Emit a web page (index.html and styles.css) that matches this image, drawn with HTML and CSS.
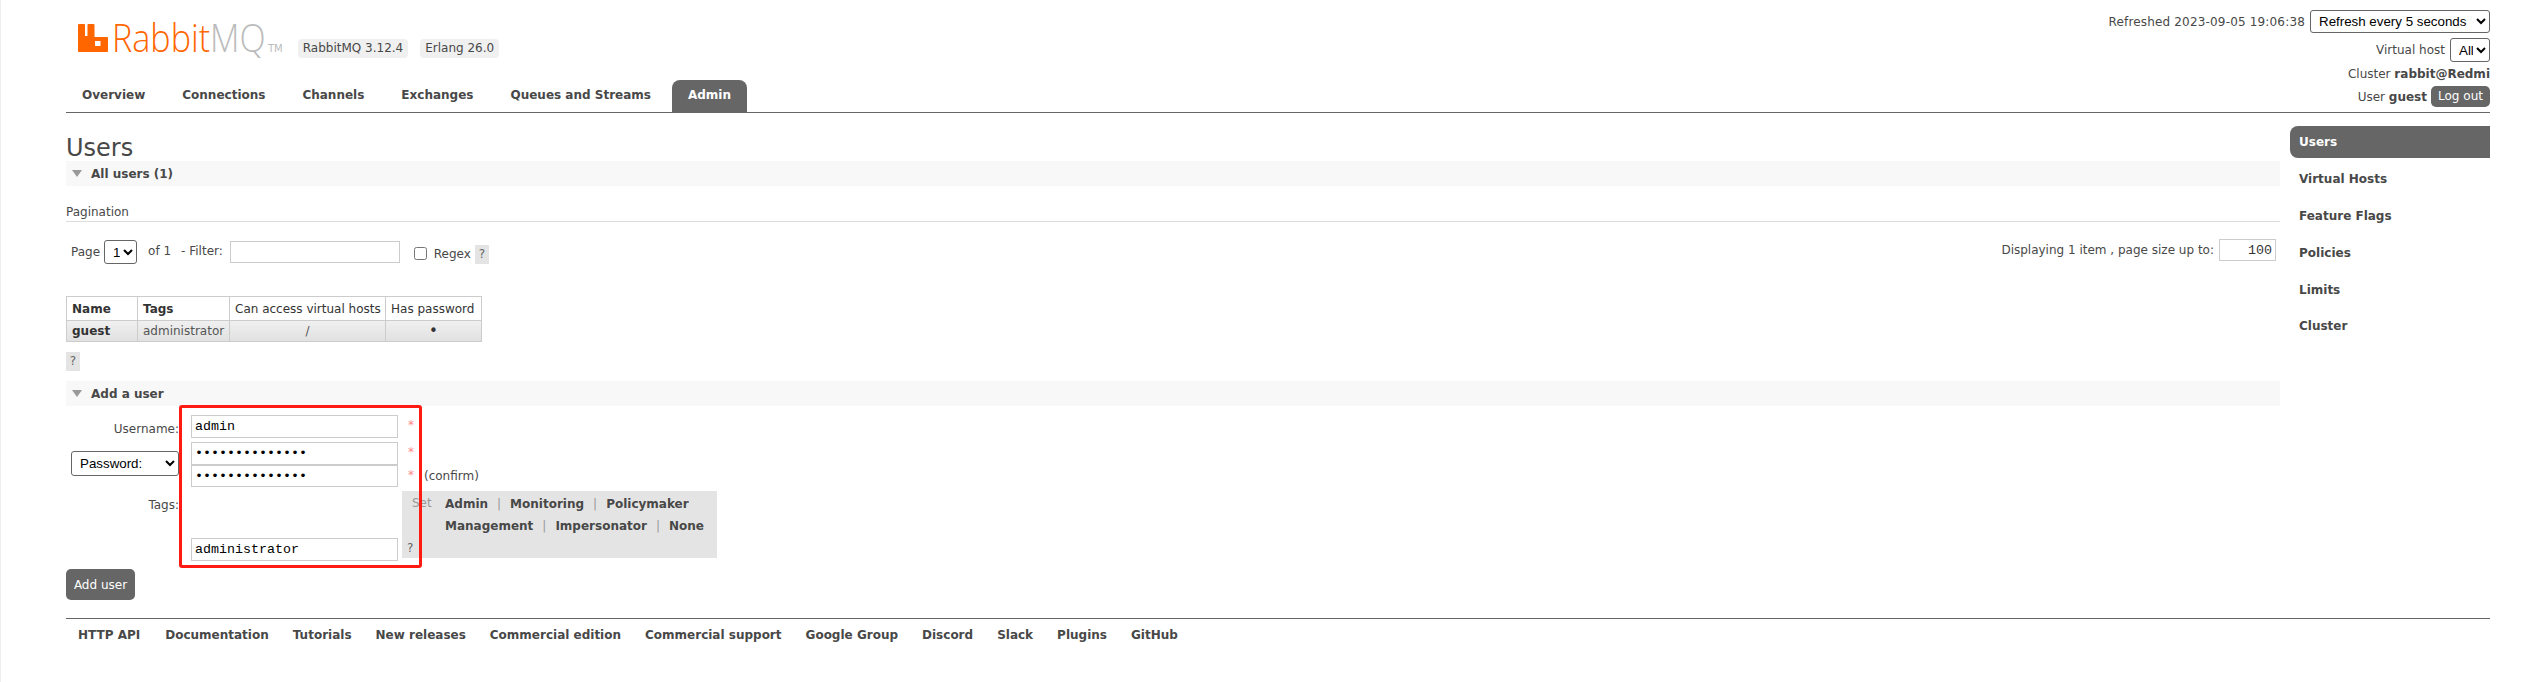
FILE: index.html
```html
<!DOCTYPE html>
<html lang="en">
<head>
<meta charset="utf-8">
<title>RabbitMQ Management</title>
<link rel="stylesheet" href="styles.css">
</head>
<body>
<div class="page">
  <header class="header">
    <div class="header-left">
      <div class="brand">
        <svg class="logo-mark" viewBox="0 0 30 28" width="30" height="28" aria-hidden="true">
          <path fill-rule="evenodd" fill="#ff6600" d="M1 0h5a1 1 0 0 1 1 1v11h2.500v-11a1 1 0 0 1 1-1h5a1 1 0 0 1 1 1v12h12.500a1 1 0 0 1 1 1v13a1 1 0 0 1-1 1h-28a1 1 0 0 1-1-1v-26a1 1 0 0 1 1-1zM17 17v5h5.500v-5z"/>
        </svg>
        <span class="logo-text"><span class="logo-rabbit">Rabbit</span><span class="logo-mq">MQ</span></span>
        <span class="logo-tm">TM</span>
        <span class="badge badge-first">RabbitMQ 3.12.4</span>
        <span class="badge">Erlang 26.0</span>
      </div>
      <nav class="tabs">
        <a class="tab">Overview</a>
        <a class="tab">Connections</a>
        <a class="tab">Channels</a>
        <a class="tab">Exchanges</a>
        <a class="tab">Queues and Streams</a>
        <a class="tab tab-active">Admin</a>
      </nav>
    </div>
    <div class="header-right">
      <div class="status-row status-refresh">
        <span class="refreshed">Refreshed 2023-09-05 19:06:38</span>
        <select class="select select-refresh"><option>Refresh every 5 seconds</option></select>
      </div>
      <div class="status-row status-vhost">
        <span>Virtual host</span>
        <select class="select select-vhost"><option>All</option></select>
      </div>
      <div class="status-row status-cluster"><span>Cluster <b>rabbit@Redmi</b></span></div>
      <div class="status-row status-user">
        <span>User <b>guest</b></span>
        <a class="logout">Log out</a>
      </div>
    </div>
  </header>

  <div class="body-row">
    <main class="main">
      <h1 class="title">Users</h1>
      <section class="bar"><i class="arrow"></i><span>All users (1)</span></section>
      <h3 class="pagination-title">Pagination</h3>
      <div class="pagination">
        <div class="pagination-left">
          <span class="page-label">Page</span>
          <select class="select select-page"><option>1</option></select>
          <span class="of-label">of 1</span>
          <span class="filter-label">- Filter:</span>
          <input class="input input-filter" type="text">
          <input class="check" type="checkbox">
          <span class="regex-label">Regex</span>
          <span class="help help-regex">?</span>
        </div>
        <div class="pagination-right">
          <span>Displaying 1 item , page size up to:</span>
          <input class="input input-size" type="text" value="100">
        </div>
      </div>

      <table class="users">
        <colgroup>
          <col class="col-name"><col class="col-tags"><col class="col-vhosts"><col class="col-pass">
        </colgroup>
        <thead>
          <tr><th class="th-strong">Name</th><th class="th-strong">Tags</th><th>Can access virtual hosts</th><th>Has password</th></tr>
        </thead>
        <tbody>
          <tr><td class="td-name">guest</td><td>administrator</td><td class="td-center">/</td><td class="td-center td-dot">•</td></tr>
        </tbody>
      </table>
      <span class="help help-table">?</span>

      <section class="bar bar-add"><i class="arrow"></i><span>Add a user</span></section>

      <form class="user-form">
        <label class="form-label label-username">Username:</label>
        <input class="input input-mono cell-user" type="text" value="admin">
        <span class="star star-user">*</span>

        <select class="select select-password"><option>Password:</option></select>
        <input class="input input-mono cell-pass1" type="password" value="administrator1">
        <span class="star star-pass1">*</span>
        <input class="input input-mono cell-pass2" type="password" value="administrator1">
        <span class="star star-pass2">*</span>
        <span class="confirm">(confirm)</span>

        <label class="form-label label-tags">Tags:</label>
        <input class="input input-mono cell-tags" type="text" value="administrator">
        <div class="tag-box">
          <span class="tag-set">Set</span>
          <div class="tag-links">
            <div class="tag-line"><a>Admin</a><i>|</i><a>Monitoring</a><i>|</i><a>Policymaker</a></div>
            <div class="tag-line"><a>Management</a><i>|</i><a>Impersonator</a><i>|</i><a>None</a></div>
          </div>
          <span class="help-plain">?</span>
        </div>
        <div class="annotation"></div>
      </form>

      <button class="add-button" type="button">Add user</button>
    </main>

    <aside class="side">
      <a class="side-item side-active">Users</a>
      <a class="side-item">Virtual Hosts</a>
      <a class="side-item">Feature Flags</a>
      <a class="side-item">Policies</a>
      <a class="side-item">Limits</a>
      <a class="side-item side-last">Cluster</a>
    </aside>
  </div>

  <footer class="footer">
    <a class="footer-first">HTTP API</a><a>Documentation</a><a>Tutorials</a><a>New releases</a><a>Commercial edition</a><a>Commercial support</a><a>Google Group</a><a>Discord</a><a>Slack</a><a>Plugins</a><a>GitHub</a>
  </footer>
</div>
</body>
</html>
```

FILE: styles.css
```css
* { box-sizing: border-box; }
html, body { margin: 0; padding: 0; background: #fff; }
body {
  font-family: "DejaVu Sans", Verdana, sans-serif;
  font-size: 12px;
  color: #484848;
  overflow: hidden;
}
.page {
  width: 2526px;
  height: 682px;
  margin: 0;
  padding: 0 36px 0 65px;
  border-left: 1px solid #eee;
}

/* header */
.header {
  display: flex;
  justify-content: space-between;
  height: 113px;
  border-bottom: 1px solid #666;
}
.header-left { display: flex; flex-direction: column; }
.brand {
  display: flex;
  align-items: flex-start;
  height: 80px;
  padding: 24px 0 0 12px;
}
.logo-mark { display: block; flex: none; }
.logo-text {
  display: block;
  flex: none;
  width: 151px;
  margin-left: 4px;
  font-family: "Open Sans", sans-serif;
  font-weight: 300;
  font-size: 39px;
  line-height: 26px;
  white-space: nowrap;
  transform: scaleX(0.875);
  transform-origin: left center;
}
.logo-rabbit { color: #ff6600; }
.logo-mq { color: #bbb; }
.logo-tm {
  color: #bbb;
  font-size: 10px;
  line-height: 10px;
  margin: 20px 0 0 5px;
}
.badge {
  margin: 15px 0 0 12px;
  height: 19px;
  line-height: 19px;
  padding: 0 5px;
  background: #f0f0f0;
  border-radius: 4px;
  font-size: 12px;
  white-space: nowrap;
}
.badge-first { margin-left: 15px; }
.tabs { display: flex; height: 32px; gap: 5px; align-items: stretch; }
.tab {
  font-weight: bold;
  padding: 0 16px;
  line-height: 31px;
  white-space: nowrap;
  border-radius: 8px 8px 0 0;
}
.tab-active { background: #666; color: #fff; }

.header-right { display: flex; flex-direction: column; align-items: flex-end; padding-top: 10px; }
.status-row { display: flex; align-items: center; white-space: nowrap; }
.status-row b { font-weight: bold; }
.status-refresh { height: 23px; gap: 5px; }
.refreshed { letter-spacing: 0.170px; }
.status-vhost { height: 24px; gap: 5px; margin-top: 5px; }
.status-cluster { height: 16px; margin-top: 4px; }
.status-user { height: 21px; gap: 4px; margin-top: 4px; }
.select {
  font-family: "Liberation Sans", Arial, sans-serif;
  font-size: 13.33px;
  color: #000;
  background: #fff;
  border: 1px solid #666;
  border-radius: 3px;
  padding: 0 0 0 4px;
}
.select-refresh { width: 180px; height: 23px; }
.select-vhost { width: 40px; height: 24px; }
.logout {
  display: block;
  width: 59px;
  height: 21px;
  line-height: 21px;
  text-align: center;
  background: #666;
  color: #fff;
  border-radius: 5px;
}

/* main column + side menu */
.body-row { display: flex; gap: 10px; }
.main { width: 2214px; flex: none; position: relative; }
.title {
  margin: 0;
  height: 48px;
  padding-top: 20px;
  font-size: 24px;
  line-height: 30px;
  font-weight: normal;
}
.bar {
  display: flex;
  align-items: center;
  height: 25px;
  padding-left: 6px;
  background: #f8f8f8;
  font-weight: bold;
}
.arrow {
  width: 0;
  height: 0;
  margin-right: 9px;
  border-left: 5.500px solid transparent;
  border-right: 5.500px solid transparent;
  border-top: 7px solid #999;
}
.pagination-title {
  margin: 0;
  height: 36px;
  padding-top: 18px;
  line-height: 16px;
  font-weight: normal;
  font-size: 12px;
  border-bottom: 1px solid #ddd;
}
.pagination {
  display: flex;
  justify-content: space-between;
  height: 74px;
  padding-top: 18px;
}
.pagination-left { display: flex; align-items: flex-start; padding-left: 5px; }
.page-label { margin-top: 5px; }
.select-page { width: 33px; height: 24px; margin: 0 0 0 4px; }
.of-label { margin: 4px 0 0 11px; }
.filter-label { margin: 4px 0 0 10px; }
.input {
  font-family: "Liberation Mono", "Courier New", monospace;
  font-size: 13.33px;
  color: #000;
  background: #fff;
  border: 1px solid #ccc;
  border-radius: 0;
  padding: 0 3px;
  outline: none;
}
.input-filter { width: 170px; height: 22px; margin: 1px 0 0 7px; }
.check { width: 13px; height: 13px; margin: 7px 0 0 14px; }
.regex-label { margin: 7px 0 0 7px; }
.help {
  display: block;
  width: 14px;
  height: 19px;
  line-height: 19px;
  text-align: center;
  background: #e4e4e4;
  color: #666;
}
.help-regex { margin: 5px 0 0 4px; }
.pagination-right { display: flex; align-items: flex-start; gap: 5px; padding-right: 4px; margin-top: -1px; }
.pagination-right span { margin-top: 4px; }
.input-size { width: 57px; height: 22px; text-align: right; color: #333; font-weight: normal; }

.users {
  border-collapse: collapse;
  table-layout: fixed;
  width: 415px;
  border: 1px solid #ccc;
}
.col-name { width: 71px; }
.col-tags { width: 92px; }
.col-vhosts { width: 156px; }
.col-pass { width: 96px; }
.users th, .users td {
  border: 1px solid #ccc;
  padding: 0 0 0 5px;
  font-size: 12px;
  white-space: nowrap;
  text-align: left;
}
.users th { height: 24px; font-weight: normal; color: #333; }
.users th.th-strong { font-weight: bold; color: #333; }
.users tbody tr { background: linear-gradient(#f0f0f0, #e0e0e0); }
.users td { height: 21px; color: #555; }
.users td.td-name { font-weight: bold; color: #333; }
.users td.td-center { text-align: center; padding: 0; }
.users td.td-dot { font-size: 15px; line-height: 15px; color: #333; }
.help-table { margin-top: 10px; }
.bar-add { margin-top: 10px; }

.user-form {
  position: relative;
  display: grid;
  grid-template-columns: 125px 207px 26px 1fr;
  grid-template-rows: 27px 23px 26px 70px;
  padding-top: 9px;
  height: 163px;
}
.form-label { text-align: right; padding-right: 12px; }
.label-username { grid-column: 1; grid-row: 1; padding-top: 7px; }
.cell-user { grid-column: 2; grid-row: 1; height: 23px; width: 207px; }
.star { color: #f88; font-size: 12px; padding-left: 10px; line-height: 14px; }
.star-user { grid-column: 3; grid-row: 1; padding-top: 3px; }
.select-password {
  grid-column: 1;
  grid-row: 2 / span 2;
  width: 108px;
  height: 25px;
  margin: 9px 0 0 5px;
}
.cell-pass1 { grid-column: 2; grid-row: 2; height: 23px; }
.star-pass1 { grid-column: 3; grid-row: 2; padding-top: 3px; }
.cell-pass2 { grid-column: 2; grid-row: 3; height: 22px; }
.star-pass2 { grid-column: 3; grid-row: 3; padding-top: 3px; }
.confirm { grid-column: 4; grid-row: 3; padding-top: 4px; }
.label-tags { grid-column: 1; grid-row: 4; padding-top: 7px; }
.cell-tags { grid-column: 2; grid-row: 4; align-self: end; height: 23px; }
.tag-box {
  grid-column: 3 / span 2;
  grid-row: 4;
  width: 315px;
  height: 67px;
  margin-left: 4px;
  background: #e4e4e4;
  position: relative;
  display: flex;
  padding: 2px 0 0 10px;
}
.tag-set { color: #999; padding-top: 3px; width: 33px; flex: none; }
.tag-line { height: 22px; line-height: 22px; white-space: nowrap; font-weight: bold; }
.tag-line i { font-style: normal; font-weight: normal; color: #999; margin: 0 9px; }
.help-plain { position: absolute; left: 5px; bottom: 3px; color: #666; }
.annotation {
  position: absolute;
  left: 113px;
  top: -1px;
  width: 243px;
  height: 163px;
  border: 3px solid #ff1a12;
  border-radius: 3px;
  pointer-events: none;
}
.add-button {
  display: block;
  width: 69px;
  height: 31px;
  padding: 0;
  border: 0;
  border-radius: 5px;
  background: #666;
  color: #fff;
  font-family: "DejaVu Sans", Verdana, sans-serif;
  font-size: 12px;
}

.side { width: 200px; flex: none; padding-top: 13px; }
.side-item {
  display: block;
  height: 37px;
  line-height: 32px;
  padding-left: 9px;
  font-weight: bold;
}
.side-active {
  height: 32px;
  margin-bottom: 5px;
  background: #666;
  color: #fff;
  border-radius: 8px 0 0 8px;
}
.side-last { margin-top: -1px; }

.footer {
  display: flex;
  height: 40px;
  margin-top: 18px;
  border-top: 1px solid #666;
  padding: 8px 0 0 12px;
  gap: 24px;
  font-weight: bold;
  line-height: 16px;
  white-space: nowrap;
}
.footer-first { margin-right: 1px; }
```
